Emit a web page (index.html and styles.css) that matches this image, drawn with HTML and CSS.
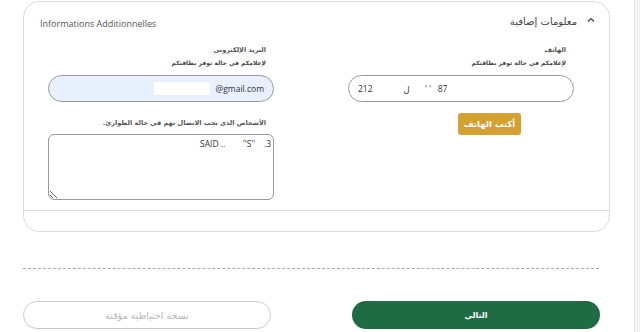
FILE: index.html
```html
<!DOCTYPE html>
<html lang="fr">
<head>
  <meta charset="UTF-8" />
  <meta name="viewport" content="width=device-width, initial-scale=1.0"/>
  <title>Informations Additionnelles</title>
  <link rel="stylesheet" href="styles.css">
</head>
<body>

  <div class="page">
    <div class="main">

      <div class="card">
        <div class="card-head">
          <span class="head-fr">Informations Additionnelles</span>
          <span class="head-ar" dir="rtl">معلومات إضافية</span>
          <svg class="chevron" width="8" height="6" viewBox="0 0 8 6">
            <path d="M1 4.5 L4 1.5 L7 4.5" fill="none" stroke="#444" stroke-width="1.2"/>
          </svg>
        </div>

        <div class="card-body">
          <div class="col" dir="rtl">
            <div class="label">البريد الإلكتروني</div>
            <div class="hint">لإعلامكم في حالة توفر بطاقتكم</div>
            <div class="field field-filled" dir="ltr">
              <span class="masked"></span>@gmail.com
            </div>
            <div class="label label-gap">الأشخاص الذي يجب الاتصال بهم في حالة الطوارئ.</div>
            <textarea class="area" dir="rtl">SAID ..        ''S''    .3</textarea>
          </div>

          <div class="col" dir="rtl">
            <div class="label">الهاتف</div>
            <div class="hint">لإعلامكم في حالة توفر بطاقتكم</div>
            <div class="field" dir="ltr"><span class="raw">212&nbsp;&nbsp;&nbsp;&nbsp;&nbsp;&nbsp;&nbsp;&nbsp;&nbsp;&nbsp;&nbsp;&nbsp;&nbsp;&nbsp;ل&nbsp;&nbsp;&nbsp;&nbsp;&nbsp;&nbsp;&nbsp;' '&nbsp;&nbsp;&nbsp;87</span></div>
            <div class="btn-row">
              <button class="btn-gold">أكتب الهاتف</button>
            </div>
          </div>
        </div>

        <div class="card-foot"></div>
      </div>

      <div class="separator"></div>

      <div class="actions">
        <button class="btn-outline">نسخة احتياطية مؤقتة</button>
        <button class="btn-green">التالي</button>
      </div>

    </div>
    <div class="side"></div>
  </div>

</body>
</html>
```

FILE: styles.css
```css
body {
  margin: 0;
  padding: 0;
  background-color: #fff;
  font-family: 'Open Sans', 'DejaVu Sans', sans-serif;
  color: #333;
}

.page {
  display: flex;
  height: 332px;
  overflow: hidden;
}

.main {
  width: 634px;
  padding: 1px 0 0 23px;
  box-sizing: border-box;
}

.side {
  flex: 1;
  background-color: #f2f4f0;
  border-left: 1px solid #e2e4e0;
}

.card {
  width: 587px;
  height: 231px;
  box-sizing: border-box;
  border: 1px solid #dcdcdc;
  border-radius: 16px;
  display: flex;
  flex-direction: column;
}

.card-head {
  display: flex;
  align-items: center;
  height: 38px;
  padding: 0 14px 0 16px;
}

.head-fr {
  font-size: 9px;
  color: #555;
  flex: 1;
  padding-top: 4px;
}

.head-ar {
  font-family: 'DejaVu Sans', sans-serif;
  font-size: 10px;
  color: #444;
  margin-right: 10px;
}

.chevron {
  margin-bottom: 3px;
}

.card-body {
  flex: 1;
  display: flex;
  justify-content: space-between;
  padding: 0 35px 0 24px;
}

.col {
  width: 226px;
  display: flex;
  flex-direction: column;
}

.label {
  font-family: 'DejaVu Sans', sans-serif;
  font-size: 6.5px;
  font-weight: bold;
  color: #555;
  margin: 6px 8px 0 0;
}

.hint {
  font-family: 'DejaVu Sans', sans-serif;
  font-size: 6px;
  font-weight: bold;
  color: #444;
  margin: 5px 8px 0 0;
}

.label-gap {
  margin-top: 17px;
}

.field {
  height: 27px;
  margin-top: 9px;
  box-sizing: border-box;
  border: 1px solid #999;
  border-radius: 14px;
  display: flex;
  align-items: center;
  padding: 0 9px;
  font-size: 8.5px;
  color: #333;
  white-space: nowrap;
}

.raw {
  unicode-bidi: bidi-override;
  direction: ltr;
}

.field-filled {
  background-color: #e8f0fe;
  justify-content: flex-end;
}

.masked {
  display: inline-block;
  width: 56px;
  height: 13px;
  background-color: #fff;
  margin-right: 6px;
}

.area {
  height: 66px;
  margin-top: 7px;
  box-sizing: border-box;
  border: 1px solid #999;
  border-radius: 6px;
  padding: 3px 2px;
  font-family: 'Open Sans', sans-serif;
  font-size: 8.5px;
  color: #333;
  text-align: right;
  unicode-bidi: plaintext;
  resize: vertical;
}

.btn-row {
  display: flex;
  justify-content: flex-start;
  margin-top: 11px;
}

.btn-gold {
  width: 63px;
  height: 22px;
  background-color: #d4a034;
  color: #fff;
  border: none;
  border-radius: 3px;
  font-family: 'DejaVu Sans', sans-serif;
  font-size: 8.5px;
  font-weight: bold;
  padding: 0;
  margin-right: 53px;
}

.card-foot {
  height: 20px;
  border-top: 1px solid #dcdcdc;
}

.separator {
  width: 576px;
  margin-top: 36px;
  border-top: 1px dashed #aaa;
}

.actions {
  display: flex;
  justify-content: space-between;
  width: 577px;
  margin-top: 32px;
}

.actions button {
  width: 248px;
  height: 28px;
  border-radius: 14px;
  font-family: 'DejaVu Sans', sans-serif;
  font-size: 8px;
  font-weight: bold;
  cursor: pointer;
}

.btn-outline {
  background-color: #fff;
  border: 1px solid #ccc;
  color: #b5b5b5;
  font-size: 9.5px !important;
  font-weight: normal !important;
}

.btn-green {
  background-color: #1f6b43;
  border: none;
  color: #fff;
}
```
